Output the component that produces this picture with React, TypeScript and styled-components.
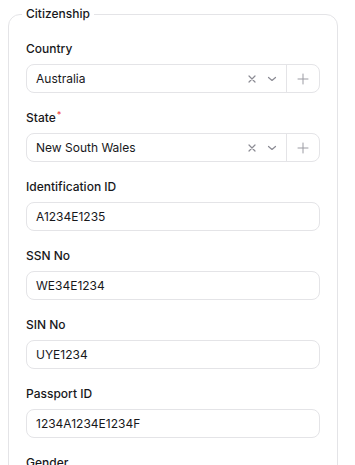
import React from "react";
import styled, { createGlobalStyle } from "styled-components";

const Global = createGlobalStyle`
  html, body { margin: 0; padding: 0; background: #fff; }
  body { font-family: Inter, "Noto Sans", sans-serif; color: #111827; -webkit-font-smoothing: antialiased; }
  * { box-sizing: border-box; }
`;

const Page = styled.div`
  padding: 6px 17px 0 8px;
`;

const Fieldset = styled.fieldset`
  margin: 0;
  border: 1px solid #e4e4e7;
  border-radius: 12px;
  padding: 19px 17px 20px 17px;
  display: flex;
  flex-direction: column;
  gap: 17px;
  min-width: 0;
`;

const Legend = styled.legend`
  margin-left: -4px;
  padding: 0 4px;
  font-size: 12px;
  line-height: 16px;
  font-weight: 500;
  color: #18181b;
`;

const Field = styled.div`
  display: flex;
  flex-direction: column;
  gap: 7px;
`;

const Label = styled.label`
  font-size: 12px;
  line-height: 16px;
  font-weight: 500;
  color: #18181b;
`;

const Req = styled.span`
  color: #ef4444;
  font-size: 9px;
  vertical-align: top;
  line-height: 10px;
  margin-left: 1px;
`;

const Box = styled.div`
  height: 29px;
  border: 1px solid #e4e4e7;
  border-radius: 8px;
  display: flex;
  align-items: center;
  background: #fff;
`;

const Value = styled.div`
  flex: 1;
  padding-left: 9px;
  font-size: 12px;
  color: #18181b;
  white-space: nowrap;
`;

const IconBtn = styled.span`
  width: 20px;
  height: 20px;
  display: flex;
  align-items: center;
  justify-content: center;
  color: #8b8b94;
`;

const Actions = styled.div`
  display: flex;
  align-items: center;
  padding-right: 4px;
`;

const AddBtn = styled.div`
  width: 33px;
  align-self: stretch;
  border-left: 1px solid #e4e4e7;
  display: flex;
  align-items: center;
  justify-content: center;
  color: #9b9ba3;
`;

const XIcon = () => (
  <svg width="10" height="10" viewBox="0 0 10 10" fill="none" stroke="currentColor" strokeWidth="1.2" strokeLinecap="round">
    <path d="M2 2 L8 8 M8 2 L2 8" />
  </svg>
);
const Chevron = () => (
  <svg width="10" height="10" viewBox="0 0 10 10" fill="none" stroke="currentColor" strokeWidth="1.2" strokeLinecap="round" strokeLinejoin="round">
    <path d="M1.5 3.5 L5 6.5 L8.5 3.5" />
  </svg>
);
const Plus = () => (
  <svg width="12" height="12" viewBox="0 0 12 12" fill="none" stroke="currentColor" strokeWidth="1" strokeLinecap="round">
    <path d="M6 1 V11 M1 6 H11" />
  </svg>
);

const SelectField = ({ label, value, required }: { label: string; value: string; required?: boolean }) => (
  <Field>
    <Label>
      {label}
      {required && <Req>*</Req>}
    </Label>
    <Box>
      <Value>{value}</Value>
      <Actions>
        <IconBtn><XIcon /></IconBtn>
        <IconBtn><Chevron /></IconBtn>
      </Actions>
      <AddBtn><Plus /></AddBtn>
    </Box>
  </Field>
);

const TextField = ({ label, value }: { label: string; value: string }) => (
  <Field>
    <Label>{label}</Label>
    <Box>
      <Value>{value}</Value>
    </Box>
  </Field>
);

export default function App() {
  return (
    <>
      <Global />
      <Page>
        <Fieldset>
          <Legend>Citizenship</Legend>
          <SelectField label="Country" value="Australia" />
          <SelectField label="State" value="New South Wales" required />
          <TextField label="Identification ID" value="A1234E1235" />
          <TextField label="SSN No" value="WE34E1234" />
          <TextField label="SIN No" value="UYE1234" />
          <TextField label="Passport ID" value="1234A1234E1234F" />
          <TextField label="Gender" value="Male" />
        </Fieldset>
      </Page>
    </>
  );
}
